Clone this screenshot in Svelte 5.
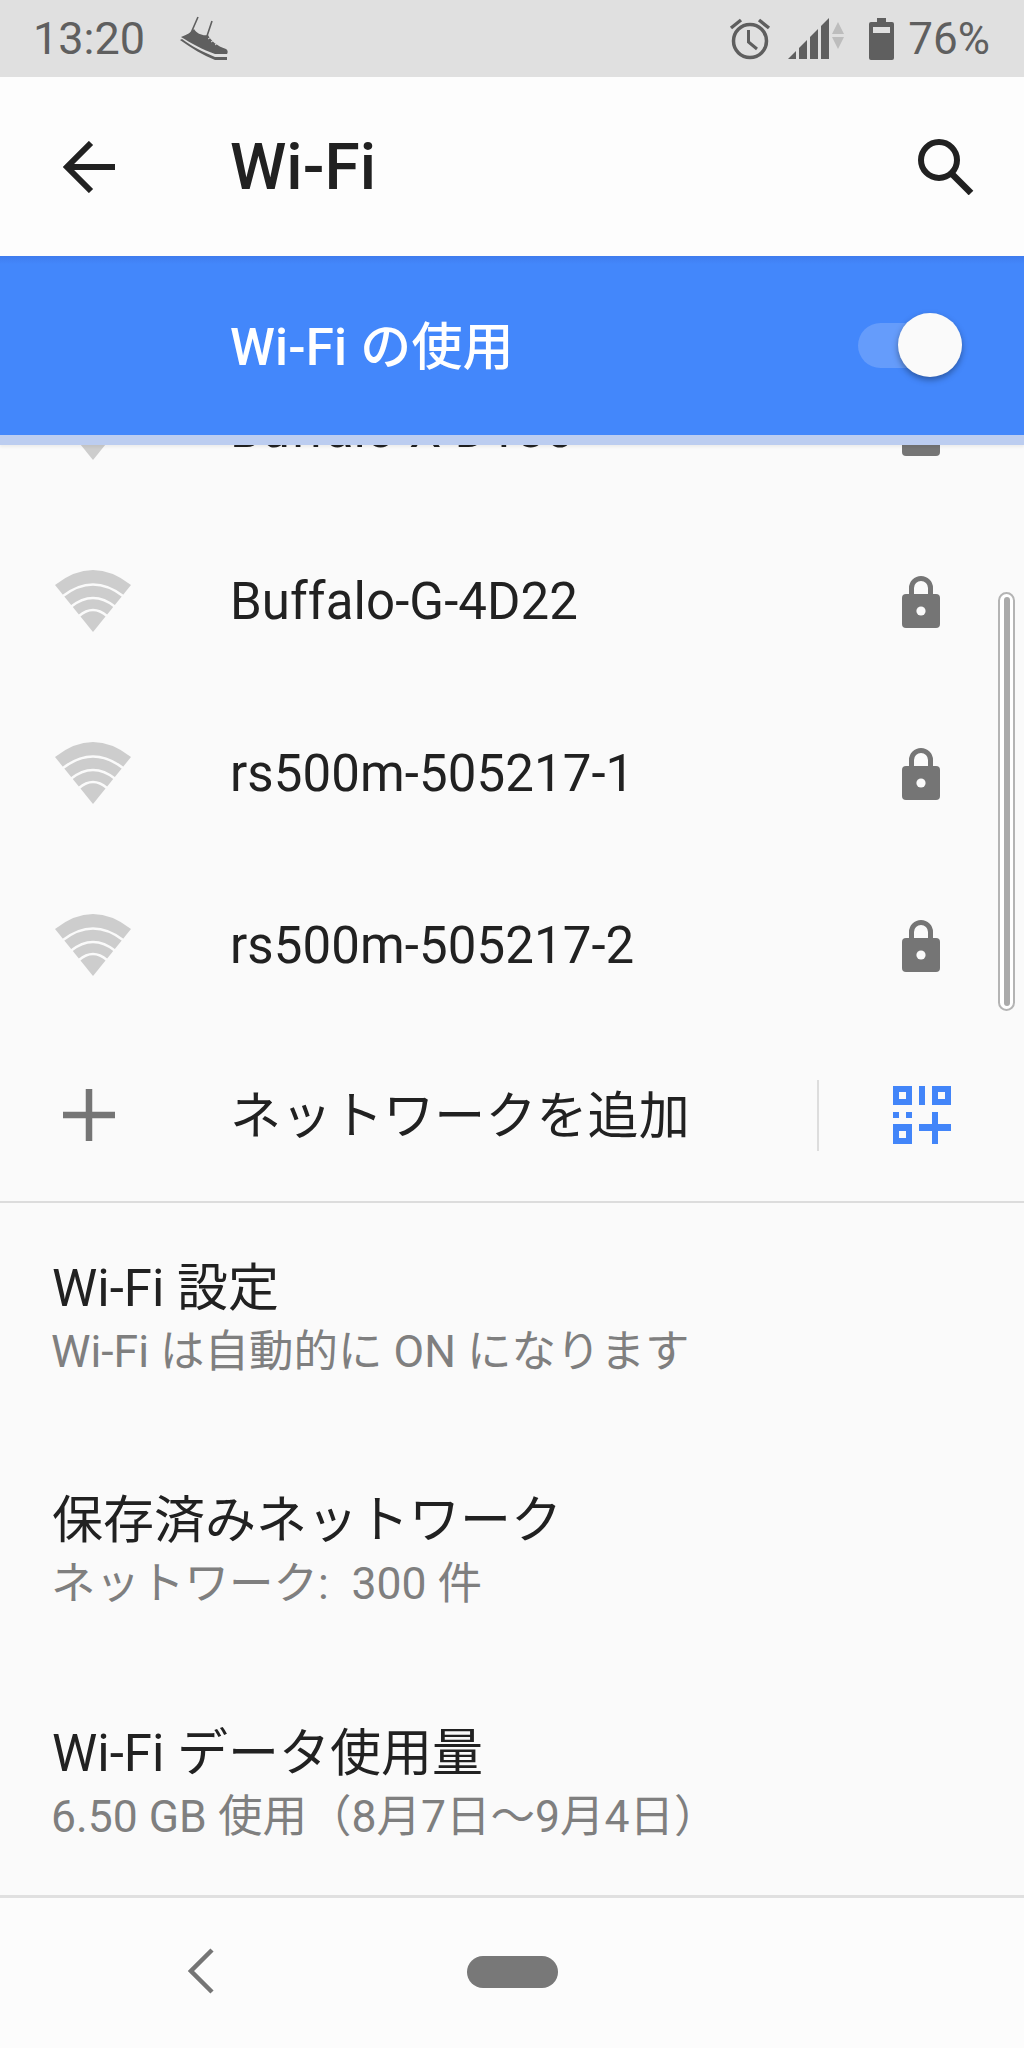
<script>
  const networks = ['Buffalo-X-D130', 'Buffalo-G-4D22', 'rs500m-505217-1', 'rs500m-505217-2'];
  const settings = [
    { title: 'Wi-Fi 設定', sub: 'Wi-Fi は自動的に ON になります' },
    { title: '保存済みネットワーク', sub: 'ネットワーク:\u2002300 件' },
    { title: 'Wi-Fi データ使用量', sub: '6.50 GB 使用（8月7日〜9月4日）' }
  ];
</script>

<div class="phone">
  <div class="status">
    <span class="clock">13:20</span>
    <svg class="shoe" width="50" height="46" viewBox="0 0 50 46">
      <path d="M19 1 L12 17 M33 5 L28 20" stroke="#5f5f5f" stroke-width="1.6" fill="none" />
      <path d="M15 13 C18 18 24 20 29 19 C32 25 38 30 47 33 C49 34 49 37 48 38 L36 38 C24 34 12 27 2 21 C8 19 12 16 15 13 Z" fill="#5f5f5f" />
      <path d="M1 24 C12 32 24 39 36 44 L48 44 L48 41 L36 41 C24 36 12 30 3 23 Z" fill="#5f5f5f" />
      <path d="M29 23 L34 20 M32 26 L37 23 M36 29 L40 26" stroke="#e0e0e0" stroke-width="1" />
    </svg>
    <div class="status-right">
      <svg width="42" height="44" viewBox="0 0 42 44">
        <circle cx="21" cy="24" r="16.5" fill="none" stroke="#5f5f5f" stroke-width="3.5" />
        <path d="M19.5 13 V25 L28 32" fill="none" stroke="#5f5f5f" stroke-width="3" />
        <path d="M2 11 L12 3 M40 11 L30 3" stroke="#5f5f5f" stroke-width="3.5" />
      </svg>
      <svg class="signal" width="60" height="42" viewBox="0 0 60 42">
        <path d="M0 41 L8 33 V41 Z M11 41 V30 L19 22 V41 Z M22 41 V19 L30 11 V41 Z M33 41 V8 L41 0 V41 Z" fill="#5f5f5f" />
        <path d="M44 16 L50 4 L56 16 Z M44 19 L50 31 L56 19 Z" fill="#bdbdbd" />
      </svg>
      <svg class="battery" width="25" height="42" viewBox="0 0 25 42">
        <path d="M8 0 H17 V4 H23 Q25 4 25 6 V40 Q25 42 23 42 H2 Q0 42 0 40 V6 Q0 4 2 4 H8 Z" fill="#5f5f5f" />
        <rect x="4" y="9" width="17" height="6" fill="#e0e0e0" />
      </svg>
      <span class="percent">76%</span>
    </div>
  </div>

  <div class="toolbar">
    <div class="lead icon-left">
      <svg width="52" height="52" viewBox="0 0 52 52">
        <path d="M52 26 H3 M28 2 L4 26 L28 50" fill="none" stroke="#212121" stroke-width="6" />
      </svg>
    </div>
    <h1>Wi-Fi</h1>
    <svg class="search" width="56" height="56" viewBox="0 0 56 56">
      <circle cx="21" cy="21" r="18" fill="none" stroke="#212121" stroke-width="6" />
      <path d="M34 35 L53 54" stroke="#212121" stroke-width="6.5" />
    </svg>
  </div>

  <div class="usebar">
    <span class="use-label">Wi-Fi の使用</span>
    <div class="switch"><div class="thumb"></div></div>
  </div>
  <div class="strip"></div>

  <div class="networks">
    {#each networks as name}
      <div class="row">
        <div class="lead">
          <svg class="wifi" width="76" height="62" viewBox="0 0 76 62">
            <path d="M0 15 Q38 -15 76 15 L38 62 Z" fill="#cdcdcd" />
            <path d="M8 26 Q38 3 68 26 M15.500 37 Q38 19 60.500 37 M24 46 Q38 34 52 46" fill="none" stroke="#fafafa" stroke-width="2.6" />
          </svg>
        </div>
        <span class="name">{name}</span>
        <svg class="lock" width="38" height="52" viewBox="0 0 38 52">
          <path d="M9.500 20 V12 A9.500 9.500 0 0 1 28.500 12 V20" fill="none" stroke="#757575" stroke-width="5" />
          <path d="M4 18 H34 Q38 18 38 22 V48 Q38 52 34 52 H4 Q0 52 0 48 V22 Q0 18 4 18 Z" fill="#757575" />
          <circle cx="19" cy="35" r="4.600" fill="#fafafa" />
        </svg>
      </div>
    {/each}

    <div class="row add">
      <div class="lead icon-left">
        <svg width="52" height="52" viewBox="0 0 52 52">
          <path d="M26 0 V52 M0 26 H52" stroke="#757575" stroke-width="6.500" />
        </svg>
      </div>
      <span class="name">ネットワークを追加</span>
      <div class="vline"></div>
      <svg class="qr" width="58" height="58" viewBox="0 0 58 58">
        <path fill-rule="evenodd" fill="#4285f9" d="M0 0 H19 V19 H0 Z M6 6 V13 H13 V6 Z M26 0 H32 V19 H26 Z M39 0 H58 V19 H39 Z M45 6 V13 H52 V6 Z M0 26 H6 V32 H0 Z M13 26 H19 V32 H13 Z M0 38 H19 V58 H0 Z M6 45 V52 H13 V45 Z M39 26 H45 V38 H58 V45 H45 V58 H39 V45 H26 V38 H39 Z" />
      </svg>
    </div>

    <div class="scrollbar"><div class="scroll-inner"></div></div>
  </div>

  <div class="settings">
    {#each settings as item}
      <div class="setting">
        <div class="title">{item.title}</div>
        <div class="sub">{item.sub}</div>
      </div>
    {/each}
  </div>

  <div class="nav">
    <svg class="nav-back" width="26" height="46" viewBox="0 0 26 46">
      <path d="M24 2 L3 23 L24 44" fill="none" stroke="#757575" stroke-width="4.500" />
    </svg>
    <div class="pill"></div>
  </div>
</div>

<style>
  :global(body) {
    margin: 0;
    background: #fafafa;
  }

  .phone {
    width: 1024px;
    height: 2048px;
    display: flex;
    flex-direction: column;
    overflow: hidden;
    font-family: Roboto, "Noto Sans CJK JP", sans-serif;
    color: #212121;
    background: #fafafa;
  }

  .status {
    height: 77px;
    flex: none;
    background: #e0e0e0;
    display: flex;
    align-items: center;
    padding: 0 34px 0 33px;
    color: #5f5f5f;
    font-size: 45px;
  }
  .shoe {
    margin-left: 34px;
  }
  .status-right {
    margin-left: auto;
    display: flex;
    align-items: center;
  }
  .signal {
    margin-left: 17px;
  }
  .battery {
    margin-left: 21px;
  }
  .percent {
    margin-left: 14px;
    font-size: 44px;
  }

  .toolbar {
    height: 179px;
    flex: none;
    background: #fdfdfd;
    display: flex;
    align-items: center;
  }
  .lead {
    width: 186px;
    margin-right: 44px;
    flex: none;
    display: flex;
    justify-content: center;
  }
  .lead.icon-left {
    width: 178px;
    margin-right: 52px;
  }
  .wifi {
    margin-top: -2px;
  }
  h1 {
    margin: 2px 0 0;
    font-size: 64px;
    font-weight: 500;
    flex: 1;
  }
  .search {
    margin-right: 50px;
  }

  .usebar {
    height: 179px;
    flex: none;
    background: linear-gradient(#3f7cee, #4387fb 8px);
    color: #fff;
    display: flex;
    align-items: center;
    justify-content: space-between;
    padding: 0 62px 0 230px;
  }
  .use-label {
    font-size: 51px;
    font-weight: 500;
    line-height: 60px;
    margin-top: 5px;
    letter-spacing: 0.2px;
  }
  .switch {
    position: relative;
    width: 104px;
    height: 45px;
    border-radius: 23px;
    background: #659cfb;
  }
  .thumb {
    position: absolute;
    right: 0;
    top: -10px;
    width: 64px;
    height: 64px;
    border-radius: 50%;
    background: #fafafa;
    box-shadow: 0 3px 6px rgba(0, 0, 0, 0.35);
  }
  .strip {
    height: 10px;
    flex: none;
    background: #bccdf0;
    box-shadow: 0 2px 3px rgba(0, 0, 0, 0.06);
    position: relative;
    z-index: 1;
  }

  .networks {
    position: relative;
    flex: none;
    height: 756px;
    border-bottom: 2px solid #dcdcdc;
    overflow: hidden;
  }
  .row {
    height: 172px;
    display: flex;
    align-items: center;
    padding-right: 84px;
  }
  .row:first-child {
    margin-top: -101px;
  }
  .row svg {
    flex: none;
  }
  .name {
    flex: 1;
    font-size: 51px;
    line-height: 60px;
    letter-spacing: 0.08px;
  }
  .add {
    height: 170px;
    padding-right: 73px;
  }
  .add svg {
    margin-top: -4px;
  }
  .vline {
    width: 2px;
    height: 71px;
    background: #dddddd;
    margin-right: 74px;
    margin-top: -4px;
  }
  .scrollbar {
    position: absolute;
    left: 998px;
    top: 147px;
    width: 17px;
    height: 419px;
    box-sizing: border-box;
    border: 2.500px solid #b4b4b4;
    border-radius: 9px;
    background: #fff;
    display: flex;
    justify-content: center;
    padding: 3px 0;
  }
  .scroll-inner {
    width: 6px;
    background: #aaaaaa;
    border-radius: 3px;
  }

  .settings {
    flex: none;
    height: 692px;
  }
  .setting {
    height: 232.500px;
    box-sizing: border-box;
    padding: 4px 0 0 52px;
    display: flex;
    flex-direction: column;
    justify-content: center;
  }
  .title {
    font-size: 51px;
    line-height: 62px;
  }
  .sub {
    font-size: 44.500px;
    line-height: 65px;
    color: #7f7f7f;
    margin-left: -1px;
  }

  .nav {
    flex: 1;
    background: #fcfcfc;
    border-top: 3px solid #e0e0e0;
    position: relative;
    display: flex;
    align-items: center;
    justify-content: center;
    z-index: 1;
  }
  .nav-back {
    position: absolute;
    left: 188px;
    top: 50px;
  }
  .pill {
    width: 91px;
    height: 32px;
    border-radius: 16px;
    background: #787878;
    margin-top: -3px;
  }
</style>
